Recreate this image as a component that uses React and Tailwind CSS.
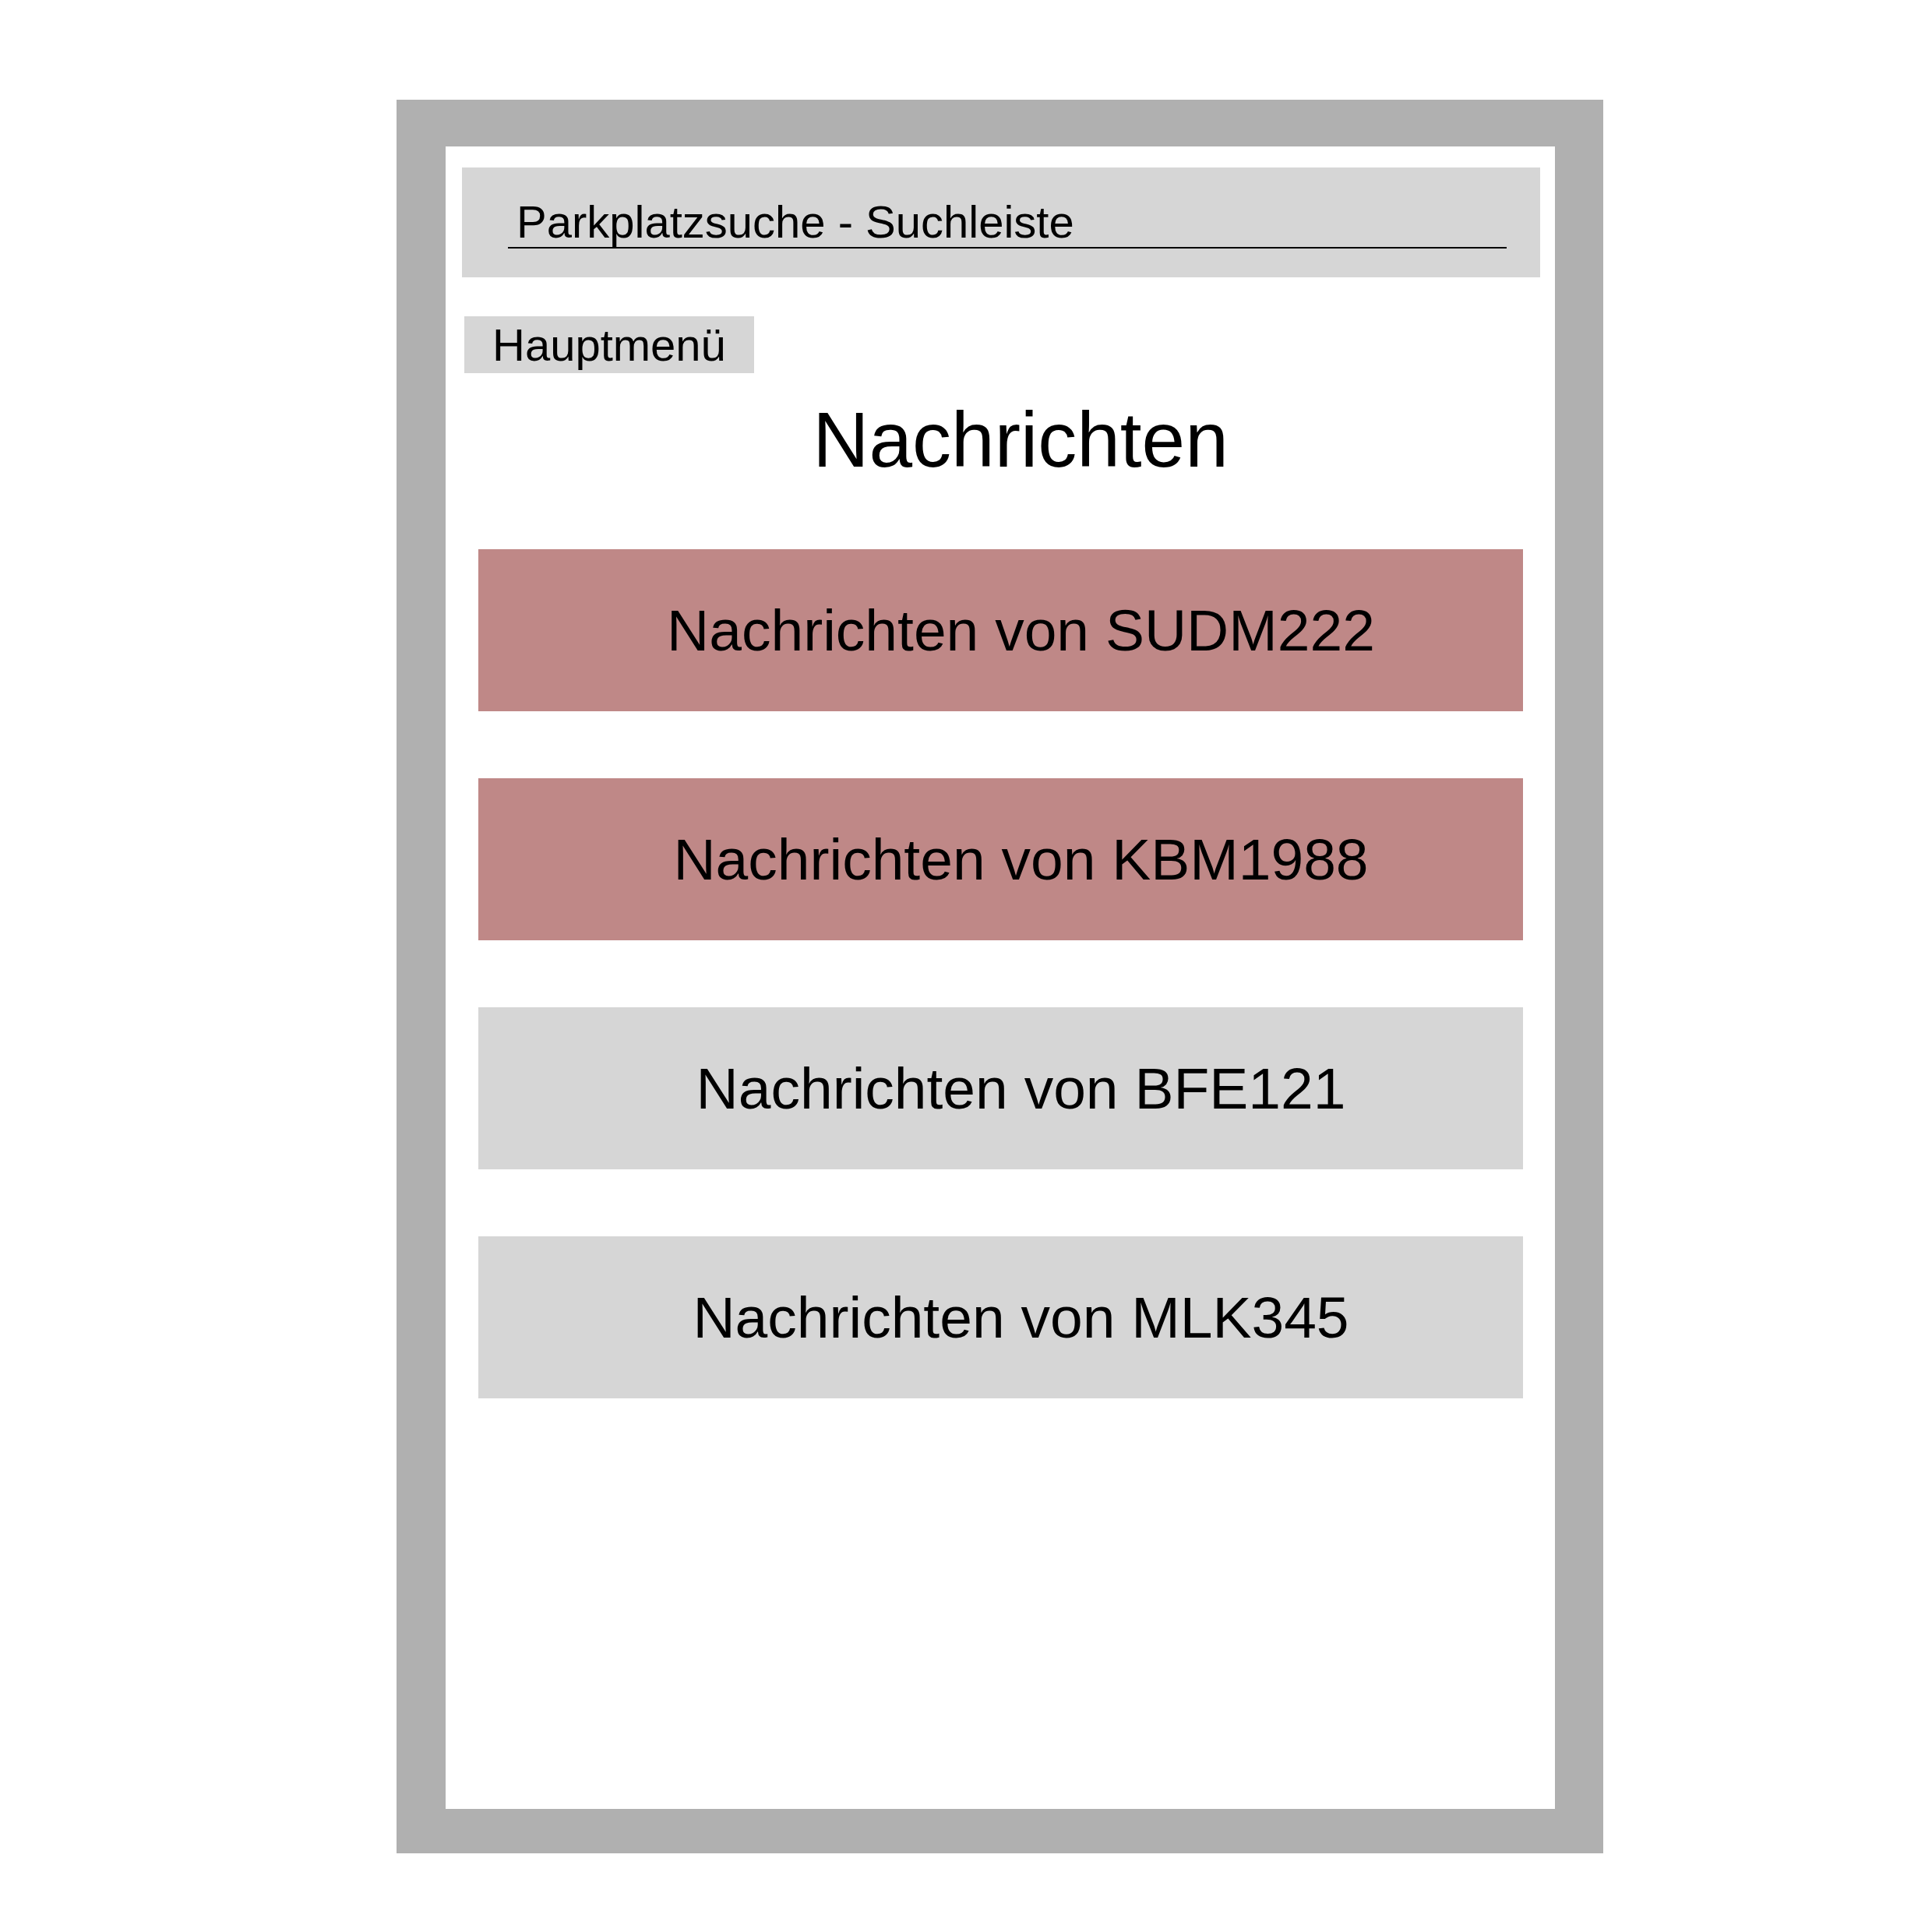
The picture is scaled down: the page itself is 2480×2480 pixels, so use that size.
export default function App() {
  const cards = [
    { label: "Nachrichten von SUDM222", color: "bg-[#bf8887]" },
    { label: "Nachrichten von KBM1988", color: "bg-[#bf8887]" },
    { label: "Nachrichten von BFE121", color: "bg-[#d6d6d6]" },
    { label: "Nachrichten von MLK345", color: "bg-[#d6d6d6]" },
  ];
  return (
    <div
      className="w-[2480px] h-[2480px] bg-white pt-[128px] pl-[509px] text-black"
      style={{ fontFamily: '"Liberation Sans", Arial, sans-serif' }}
    >
      <div className="w-[1549px] h-[2251px] bg-[#b0b0b0] pt-[60px] pl-[63px] pr-[62px] pb-[57px]">
        <div className="w-full h-full bg-white flex flex-col">
          <div className="mt-[27px] ml-[21px] w-[1384px] h-[141px] bg-[#d6d6d6] pt-[41px] pl-[59px] pr-[43px]">
            <div className="border-b-2 border-black pb-[3px] pl-[11px] text-[58px] leading-[58px] h-[63px]">
              Parkplatzsuche - Suchleiste
            </div>
          </div>
          <div className="mt-[50px] ml-[24px] w-[372px] h-[73px] bg-[#d6d6d6] pl-[36px] text-[58px] leading-[73px]">
            Hauptmenü
          </div>
          <div className="mt-[35px] pl-[52px] text-center text-[100px] leading-[100px] h-[100px]">
            Nachrichten
          </div>
          <div className="mt-[91px] ml-[42px] w-[1341px] flex flex-col gap-[86px]">
            {cards.map((c) => (
              <div
                key={c.label}
                className={`${c.color} h-[208px] flex items-center justify-center pl-[52px] text-[75px] leading-none`}
              >
                {c.label}
              </div>
            ))}
          </div>
        </div>
      </div>
    </div>
  );
}
